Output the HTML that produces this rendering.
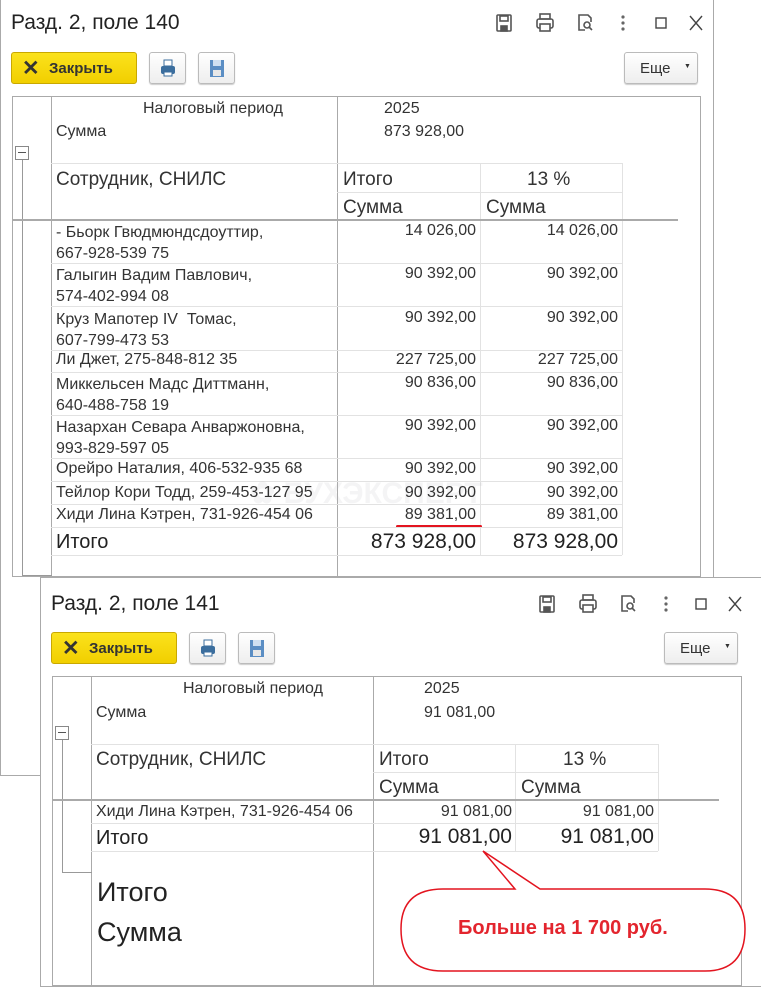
<!DOCTYPE html>
<html><head><meta charset="utf-8"><style>
*{margin:0;padding:0;box-sizing:border-box}
body{width:761px;height:983px;background:#fff;position:relative;overflow:hidden;font-family:"Liberation Sans",sans-serif;color:#333}
.a{position:absolute}
.t{position:absolute;white-space:nowrap;font-size:16px;color:#333}
.r{text-align:right}
.h{position:absolute;height:1px;background:#e2e2e2}
.v{position:absolute;width:1px;background:#e2e2e2}
.g{background:#999}
.btn{position:absolute;border:1px solid #bbb;border-radius:3px;background:linear-gradient(#fff,#eee);box-shadow:0 1px 1px #ccc}
.yb{position:absolute;border:1px solid #c9a800;border-radius:3px;background:linear-gradient(#fbe21c,#f1cf00);font-weight:bold;font-size:15px;color:#333}
</style></head><body>

<!-- Window 1 -->
<div class="a" style="left:0;top:0;width:714px;height:776px;border:1px solid #aaa;border-top:none;border-left:1px solid #aaa"></div>
<div class="t" style="left:11px;top:11px;font-size:21px;color:#222">Разд. 2, поле 140</div>
<svg class="a" style="left:490px;top:10px" width="220" height="26" viewBox="0 0 220 26">
<g fill="none" stroke="#555" stroke-width="1.6">
<rect x="7" y="5" width="14" height="16" rx="1"/><rect x="10" y="6" width="8" height="5"/><rect x="11" y="16" width="6" height="5" fill="#555"/>
<rect x="47" y="9" width="16" height="9" rx="2"/><rect x="50" y="4" width="10" height="5"/><rect x="50" y="14" width="10" height="7" fill="#fff"/>
<path d="M95 20h-6V5h9l3 3v4"/><circle cx="97" cy="15" r="3"/><path d="M99 17l3 3"/>
</g>
<g fill="#666"><circle cx="133" cy="7" r="1.6"/><circle cx="133" cy="13" r="1.6"/><circle cx="133" cy="19" r="1.6"/></g>
<rect x="166" y="8" width="10" height="10" fill="none" stroke="#444" stroke-width="1.4"/>
<path d="M200 6l12 14M212 6l-12 14" stroke="#444" stroke-width="1.4"/>
</svg>
<div class="yb" style="left:11px;top:52px;width:126px;height:32px"><span class="a" style="left:10px;top:3px;font-size:21px">✕</span><span class="a" style="left:37px;top:7px">Закрыть</span></div>
<div class="btn" style="left:149px;top:52px;width:37px;height:32px"><svg width="37" height="30"><rect x="11" y="13" width="14" height="8" rx="2" fill="#3b6e9e"/><rect x="14" y="7" width="8" height="6" fill="#fff" stroke="#3b6e9e"/><rect x="14" y="19" width="8" height="4" fill="#fff" stroke="#3b6e9e"/></svg></div>
<div class="btn" style="left:198px;top:52px;width:37px;height:32px"><svg width="37" height="30"><rect x="11" y="7" width="14" height="17" fill="#5b8ec4"/><rect x="14" y="7" width="8" height="6" fill="#cfe0f2"/><rect x="14" y="17" width="8" height="6" fill="#e8e8e8"/></svg></div>
<div class="btn" style="left:624px;top:52px;width:74px;height:32px"><span class="a" style="left:15px;top:7px;font-size:15px">Еще</span><span class="a" style="left:59px;top:10px;font-size:7px">▼</span></div>

<div class="a" style="left:12px;top:96px;width:689px;height:481px;border:1px solid #aaa"></div>
<div class="v g" style="left:51px;top:96px;height:481px;background:#aaa"></div>
<div class="v" style="left:337px;top:96px;height:481px;background:#aaa"></div>
<div class="v" style="left:480px;top:163px;height:392px"></div>
<div class="v" style="left:622px;top:163px;height:392px"></div>
<div class="a" style="left:15px;top:146px;width:14px;height:14px;border:1px solid #888;background:#fff"><div class="a" style="left:2px;top:5px;width:8px;height:1px;background:#555"></div></div>
<div class="v" style="left:22px;top:160px;height:416px;background:#999"></div>
<div class="h" style="left:22px;top:575px;width:30px;background:#999"></div>
<div class="t" style="left:143px;top:100px">Налоговый период</div>
<div class="t" style="left:384px;top:100px">2025</div>
<div class="t" style="left:56px;top:123px">Сумма</div>
<div class="t" style="left:384px;top:123px">873 928,00</div>
<div class="h" style="left:51px;top:163px;width:571px"></div>
<div class="h" style="left:337px;top:192px;width:285px"></div>
<div class="t" style="left:56px;top:169px;font-size:19px">Сотрудник, СНИЛС</div>
<div class="t" style="left:343px;top:169px;font-size:19px">Итого</div>
<div class="t" style="left:527px;top:169px;font-size:19px">13 %</div>
<div class="t" style="left:343px;top:197px;font-size:19px">Сумма</div>
<div class="t" style="left:486px;top:197px;font-size:19px">Сумма</div>
<div class="h" style="left:12px;top:219px;width:666px;height:2px;background:#aaa"></div>

<div class="t" style="left:56px;top:222px;line-height:21px">- Бьорк Гвюдмюндсдоуттир,<br>667-928-539 75</div>
<div class="t r" style="left:337px;top:222px;width:139px">14 026,00</div><div class="t r" style="left:480px;top:222px;width:138px">14 026,00</div>
<div class="h" style="left:51px;top:263px;width:571px"></div>
<div class="t" style="left:56px;top:265px;line-height:21px">Галыгин Вадим Павлович,<br>574-402-994 08</div>
<div class="t r" style="left:337px;top:265px;width:139px">90 392,00</div><div class="t r" style="left:480px;top:265px;width:138px">90 392,00</div>
<div class="h" style="left:51px;top:306px;width:571px"></div>
<div class="t" style="left:56px;top:309px;line-height:21px">Круз Мапотер IV&nbsp; Томас,<br>607-799-473 53</div>
<div class="t r" style="left:337px;top:309px;width:139px">90 392,00</div><div class="t r" style="left:480px;top:309px;width:138px">90 392,00</div>
<div class="h" style="left:51px;top:350px;width:571px"></div>
<div class="t" style="left:56px;top:351px">Ли Джет, 275-848-812 35</div>
<div class="t r" style="left:337px;top:351px;width:139px">227 725,00</div><div class="t r" style="left:480px;top:351px;width:138px">227 725,00</div>
<div class="h" style="left:51px;top:372px;width:571px"></div>
<div class="t" style="left:56px;top:374px;line-height:21px">Миккельсен Мадс Диттманн,<br>640-488-758 19</div>
<div class="t r" style="left:337px;top:374px;width:139px">90 836,00</div><div class="t r" style="left:480px;top:374px;width:138px">90 836,00</div>
<div class="h" style="left:51px;top:415px;width:571px"></div>
<div class="t" style="left:56px;top:417px;line-height:21px">Назархан Севара Анваржоновна,<br>993-829-597 05</div>
<div class="t r" style="left:337px;top:417px;width:139px">90 392,00</div><div class="t r" style="left:480px;top:417px;width:138px">90 392,00</div>
<div class="h" style="left:51px;top:458px;width:571px"></div>
<div class="t" style="left:56px;top:460px">Орейро Наталия, 406-532-935 68</div>
<div class="t r" style="left:337px;top:460px;width:139px">90 392,00</div><div class="t r" style="left:480px;top:460px;width:138px">90 392,00</div>
<div class="h" style="left:51px;top:481px;width:571px"></div>
<div class="t" style="left:250px;top:476px;font-size:30px;font-weight:bold;color:rgba(180,180,190,0.15)">✿ БУХЭКСПЕРТ</div>
<div class="t" style="left:56px;top:484px">Тейлор Кори Тодд, 259-453-127 95</div>
<div class="t r" style="left:337px;top:484px;width:139px">90 392,00</div><div class="t r" style="left:480px;top:484px;width:138px">90 392,00</div>
<div class="h" style="left:51px;top:504px;width:571px"></div>
<div class="t" style="left:56px;top:506px">Хиди Лина Кэтрен, 731-926-454 06</div>
<div class="t r" style="left:337px;top:506px;width:139px">89 381,00</div><div class="t r" style="left:480px;top:506px;width:138px">89 381,00</div>
<div class="a" style="left:396px;top:525px;width:86px;height:3px;background:#e3141f;border-radius:2px"></div>
<div class="h" style="left:51px;top:527px;width:571px"></div>
<div class="t" style="left:56px;top:531px;font-size:20px;color:#222">Итого</div>
<div class="t r" style="left:337px;top:530px;width:139px;font-size:21px;color:#222">873 928,00</div><div class="t r" style="left:480px;top:530px;width:138px;font-size:21px;color:#222">873 928,00</div>
<div class="h" style="left:51px;top:555px;width:571px"></div>

<!-- Window 2 -->
<div class="a" style="left:40px;top:577px;width:725px;height:410px;border:1px solid #aaa;background:#fff"></div>
<div class="t" style="left:51px;top:592px;font-size:21px;color:#222">Разд. 2, поле 141</div>
<svg class="a" style="left:528px;top:591px" width="230" height="26" viewBox="0 0 220 26">
<g fill="none" stroke="#555" stroke-width="1.6">
<rect x="7" y="5" width="14" height="16" rx="1"/><rect x="10" y="6" width="8" height="5"/><rect x="11" y="16" width="6" height="5" fill="#555"/>
<rect x="47" y="9" width="16" height="9" rx="2"/><rect x="50" y="4" width="10" height="5"/><rect x="50" y="14" width="10" height="7" fill="#fff"/>
<path d="M95 20h-6V5h9l3 3v4"/><circle cx="97" cy="15" r="3"/><path d="M99 17l3 3"/>
</g>
<g fill="#666"><circle cx="133" cy="7" r="1.6"/><circle cx="133" cy="13" r="1.6"/><circle cx="133" cy="19" r="1.6"/></g>
<rect x="163" y="8" width="10" height="10" fill="none" stroke="#444" stroke-width="1.4"/>
<path d="M196 6l12 14M208 6l-12 14" stroke="#444" stroke-width="1.4"/>
</svg>
<div class="yb" style="left:51px;top:632px;width:126px;height:32px"><span class="a" style="left:10px;top:3px;font-size:21px">✕</span><span class="a" style="left:37px;top:7px">Закрыть</span></div>
<div class="btn" style="left:189px;top:632px;width:37px;height:32px"><svg width="37" height="30"><rect x="11" y="13" width="14" height="8" rx="2" fill="#3b6e9e"/><rect x="14" y="7" width="8" height="6" fill="#fff" stroke="#3b6e9e"/><rect x="14" y="19" width="8" height="4" fill="#fff" stroke="#3b6e9e"/></svg></div>
<div class="btn" style="left:238px;top:632px;width:37px;height:32px"><svg width="37" height="30"><rect x="11" y="7" width="14" height="17" fill="#5b8ec4"/><rect x="14" y="7" width="8" height="6" fill="#cfe0f2"/><rect x="14" y="17" width="8" height="6" fill="#e8e8e8"/></svg></div>
<div class="btn" style="left:664px;top:632px;width:74px;height:32px"><span class="a" style="left:15px;top:7px;font-size:15px">Еще</span><span class="a" style="left:59px;top:10px;font-size:7px">▼</span></div>

<div class="a" style="left:52px;top:676px;width:690px;height:310px;border:1px solid #aaa"></div>
<div class="v" style="left:91px;top:676px;height:310px;background:#aaa"></div>
<div class="v" style="left:373px;top:676px;height:310px;background:#aaa"></div>
<div class="v" style="left:515px;top:744px;height:107px"></div>
<div class="v" style="left:658px;top:744px;height:107px"></div>
<div class="a" style="left:55px;top:726px;width:14px;height:14px;border:1px solid #888;background:#fff"><div class="a" style="left:2px;top:5px;width:8px;height:1px;background:#555"></div></div>
<div class="v" style="left:62px;top:740px;height:132px;background:#999"></div>
<div class="h" style="left:62px;top:872px;width:30px;background:#999"></div>
<div class="t" style="left:183px;top:680px">Налоговый период</div>
<div class="t" style="left:424px;top:680px">2025</div>
<div class="t" style="left:96px;top:704px">Сумма</div>
<div class="t" style="left:424px;top:704px">91 081,00</div>
<div class="h" style="left:91px;top:744px;width:567px"></div>
<div class="h" style="left:373px;top:772px;width:285px"></div>
<div class="t" style="left:96px;top:749px;font-size:19px">Сотрудник, СНИЛС</div>
<div class="t" style="left:379px;top:749px;font-size:19px">Итого</div>
<div class="t" style="left:563px;top:749px;font-size:19px">13 %</div>
<div class="t" style="left:379px;top:777px;font-size:19px">Сумма</div>
<div class="t" style="left:521px;top:777px;font-size:19px">Сумма</div>
<div class="h" style="left:52px;top:799px;width:667px;height:2px;background:#aaa"></div>
<div class="t" style="left:96px;top:803px">Хиди Лина Кэтрен, 731-926-454 06</div>
<div class="t r" style="left:373px;top:803px;width:139px">91 081,00</div><div class="t r" style="left:515px;top:803px;width:139px">91 081,00</div>
<div class="h" style="left:91px;top:823px;width:567px"></div>
<div class="t" style="left:96px;top:827px;font-size:20px;color:#222">Итого</div>
<div class="t r" style="left:373px;top:825px;width:139px;font-size:21px;color:#222">91 081,00</div><div class="t r" style="left:515px;top:825px;width:139px;font-size:21px;color:#222">91 081,00</div>
<div class="h" style="left:91px;top:851px;width:567px"></div>
<div class="t" style="left:97px;top:877px;font-size:27px;color:#222">Итого</div>
<div class="t" style="left:97px;top:917px;font-size:27px;color:#222">Сумма</div>

<svg class="a" style="left:0;top:0" width="761" height="983">
<path d="M483 851 L540 889 L705 889 Q745 889 745 929 Q745 971 705 971 L443 971 Q401 971 401 929 Q401 889 443 889 L515 889 Z" fill="#fff" stroke="#e3141f" stroke-width="1.5"/>
</svg>
<div class="t" style="left:458px;top:917px;font-size:20px;font-weight:bold;color:#e3252e">Больше на 1 700 руб.</div>
</body></html>
